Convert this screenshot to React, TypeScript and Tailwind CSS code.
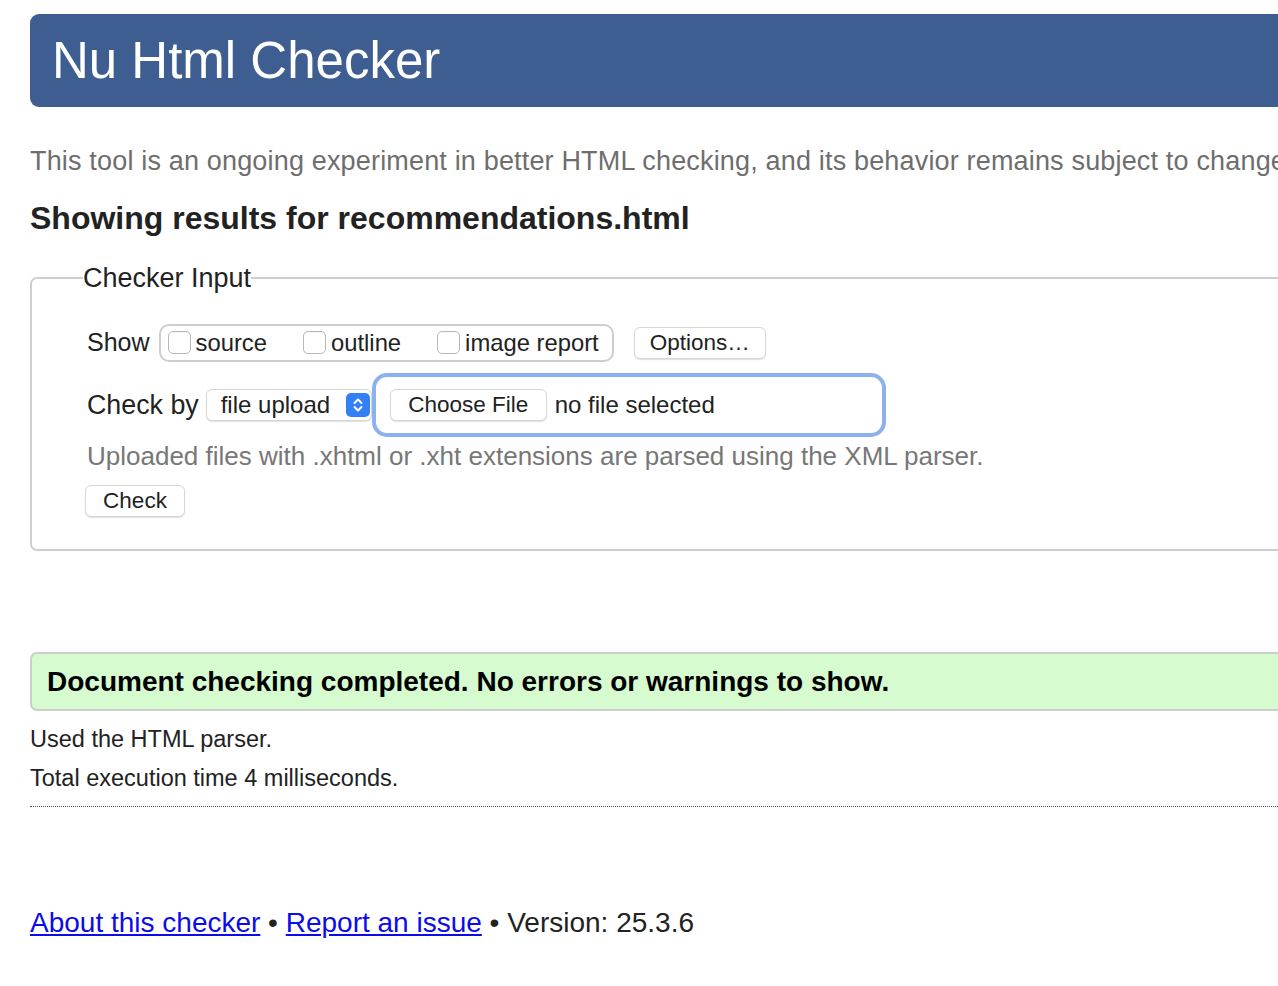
import React from "react"

const FONT = "font-['Liberation_Sans','Helvetica','Arial',sans-serif]"

function Checkbox({ label }: { label: string }) {
  return (
    <label className="flex items-center">
      <span className="inline-block w-[23px] h-[23px] rounded-[5px] border border-[#b8b8b8] bg-white shadow-[inset_0_1px_1px_rgba(0,0,0,0.04)]" />
      <span className="ml-[5px] text-[23.8px] leading-none text-[#222]">{label}</span>
    </label>
  )
}

function MacButton({ children, className = "" }: { children: React.ReactNode; className?: string }) {
  return (
    <button
      type="button"
      className={`h-[32px] rounded-[6px] bg-white border border-[#d6d6d6] shadow-[0_1px_1px_rgba(0,0,0,0.12)] text-[22.5px] leading-none text-[#222] ${className}`}
    >
      {children}
    </button>
  )
}

export default function App() {
  return (
    <div className={`w-full overflow-hidden bg-white ${FONT}`}>
      <div className="w-[1450px] pl-[30px] pt-[14px] pb-[40px]">
        {/* banner */}
        <div className="h-[93px] rounded-l-[9px] bg-[#3e5e91] flex items-center pl-[22px]">
          <h1 className="text-[51px] leading-none text-white">Nu Html Checker</h1>
        </div>

        <p className="mt-[40px] text-[27px] tracking-[0.17px] leading-[28px] text-[#6e6e6e] whitespace-nowrap">
          This tool is an ongoing experiment in better HTML checking, and its behavior remains subject to change
        </p>

        <h2 className="mt-[26px] text-[32px] leading-[34px] font-bold text-[#222]">
          Showing results for recommendations.html
        </h2>

        <fieldset className="mt-[29px] border-2 border-[#cfcfcf] rounded-[7px] pl-[55px] pt-[32px] pb-[32px]">
          <legend className="ml-[-4px] text-[27px] leading-[28px] text-[#222]">Checker Input</legend>

          {/* show row */}
          <div className="flex items-center h-[38px]">
            <span className="text-[25px] text-[#222]">Show</span>
            <div className="ml-[9px] h-[38px] flex items-center gap-[36px] border-2 border-[#cdcdcd] rounded-[10px] pl-[7px] pr-[13px]">
              <Checkbox label="source" />
              <Checkbox label="outline" />
              <Checkbox label="image report" />
            </div>
            <MacButton className="ml-[20px] w-[132px]">Options…</MacButton>
          </div>

          {/* check by row */}
          <div className="mt-[11px] flex items-center h-[64px]">
            <span className="text-[26.8px] text-[#222]">Check by</span>
            <div className="ml-[7px] h-[32px] w-[166px] flex items-center justify-between rounded-[6px] bg-white border border-[#d6d6d6] shadow-[0_1px_1px_rgba(0,0,0,0.12)] pl-[14px] pr-[1px]">
              <span className="text-[24px] leading-none text-[#222]">file upload</span>
              <span className="w-[24px] h-[24px] rounded-[5px] bg-[#3380f5] flex items-center justify-center">
                <svg width="12" height="18" viewBox="0 0 12 18" fill="none" stroke="white" strokeWidth="2" strokeLinecap="round" strokeLinejoin="round">
                  <path d="M2.5 7 L6 3.5 L9.5 7" />
                  <path d="M2.5 11 L6 14.5 L9.5 11" />
                </svg>
              </span>
            </div>
            <div className="h-[64px] w-[514px] border-4 border-[#8cb1ef] rounded-[15px] flex items-center pl-[14px]">
              <MacButton className="w-[157px]">Choose File</MacButton>
              <span className="ml-[8px] text-[24px] leading-none text-[#222]">no file selected</span>
            </div>
          </div>

          <p className="mt-[5px] text-[26px] leading-[28px] text-[#777]">
            Uploaded files with .xhtml or .xht extensions are parsed using the XML parser.
          </p>

          <MacButton className="mt-[15px] ml-[-2px] w-[100px]">Check</MacButton>
        </fieldset>

        {/* result */}
        <div className="mt-[101px] h-[59px] flex items-center pl-[15px] bg-[#d5fbcf] border-2 border-[#cdcdcd] rounded-[7px]">
          <p className="text-[28px] leading-none font-bold text-black">
            Document checking completed. No errors or warnings to show.
          </p>
        </div>

        <p className="mt-[9px] text-[23.5px] leading-[39px] text-[#222]">Used the HTML parser.</p>
        <p className="text-[23.5px] leading-[39px] text-[#222]">Total execution time 4 milliseconds.</p>

        <hr className="mt-[8px] border-0 border-t border-dotted border-[#555]" />

        <p className="mt-[100px] text-[28px] leading-[32px] text-[#222]">
          <a href="#" className="text-[#0b0bec] underline">About this checker</a>
          {" • "}
          <a href="#" className="text-[#0b0bec] underline">Report an issue</a>
          {" • Version: 25.3.6"}
        </p>
      </div>
    </div>
  )
}
